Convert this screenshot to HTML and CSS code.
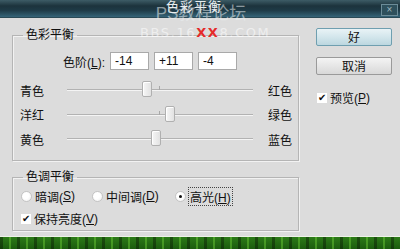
FILE: index.html
```html
<!DOCTYPE html>
<html lang="zh-CN">
<head>
  <meta charset="UTF-8" />
  <title>色彩平衡</title>
  <link rel="stylesheet" href="styles.css">
</head>
<body>
  <div class="window">
    <div class="titlebar">
      <span class="title">色彩平衡</span>
      <span class="close">×</span>
    </div>

    <div class="dialog">
      <div class="main">
        <fieldset class="group balance">
          <legend>色彩平衡</legend>
          <div class="levels">
            <label>色阶(<u>L</u>):</label>
            <input class="field" value="-14">
            <input class="field" value="+11">
            <input class="field" value="-4">
          </div>
          <div class="slider-row first">
            <span class="side">青色</span>
            <div class="track"><span class="tick"></span><span class="thumb" style="left: calc(43% - 5px)"></span></div>
            <span class="side">红色</span>
          </div>
          <div class="slider-row">
            <span class="side">洋红</span>
            <div class="track"><span class="tick"></span><span class="thumb" style="left: calc(55.5% - 5px)"></span></div>
            <span class="side">绿色</span>
          </div>
          <div class="slider-row">
            <span class="side">黄色</span>
            <div class="track"><span class="tick"></span><span class="thumb" style="left: calc(48% - 5px)"></span></div>
            <span class="side">蓝色</span>
          </div>
        </fieldset>

        <fieldset class="group tone">
          <legend>色调平衡</legend>
          <div class="radios">
            <span class="option"><span class="radio"></span>暗调(<u>S</u>)</span>
            <span class="option"><span class="radio"></span>中间调(<u>D</u>)</span>
            <span class="option"><span class="radio on"></span><span class="focus">高光(<u>H</u>)</span></span>
          </div>
          <div class="option keep"><span class="check">✔</span>保持亮度(<u>V</u>)</div>
        </fieldset>
      </div>

      <div class="actions">
        <button class="btn default">好</button>
        <button class="btn">取消</button>
        <div class="option preview"><span class="check">✔</span>预览(<u>P</u>)</div>
      </div>
    </div>

    <div class="desktop"></div>

    <div class="watermark">
      <div class="wm-big">PS教程论坛</div>
      <div class="wm-small">BBS.16<span class="red">XX</span>8.COM</div>
    </div>
  </div>
</body>
</html>
```

FILE: styles.css
```css
body {
  margin: 0;
  font-family: "Liberation Sans", "Noto Sans CJK SC", sans-serif;
  font-size: 12px;
  color: #111;
  background: #dcdcdc;
}

.window {
  position: relative;
  width: 400px;
  height: 249px;
  overflow: hidden;
  background: #dcdcdc;
}

.titlebar {
  height: 18px;
  position: relative;
  background: linear-gradient(to bottom, #3d5c66 0%, #1c333c 35%, #1e3a46 60%, #356478 100%);
  border-bottom: 1px solid #2a4a56;
  box-sizing: border-box;
}

.title {
  position: absolute;
  left: 166px;
  top: 0;
  font-size: 13px;
  line-height: 14px;
  color: #e8eef0;
  letter-spacing: 1px;
}

.close {
  position: absolute;
  left: 381px;
  top: 4px;
  width: 15px;
  height: 10px;
  border: 1px solid #6c8c98;
  color: #9fb6be;
  font-size: 10px;
  line-height: 10px;
  text-align: center;
  background: #2e505c;
}

.dialog {
  display: flex;
  height: 218px;
}

.main {
  width: 287px;
  margin-left: 12px;
}

.group {
  margin: 0;
  padding: 0;
  border: 1px solid #b5b5b5;
  box-shadow: inset 1px 1px 0 #f2f2f2, 1px 1px 0 #f2f2f2;
}

.group legend {
  margin-left: 10px;
  padding: 0 3px;
  line-height: 14px;
  font-size: 12px;
}

.balance {
  margin-top: 10px;
  height: 133px;
  box-sizing: border-box;
}

.levels {
  display: flex;
  align-items: center;
  gap: 5px;
  padding-left: 50px;
  margin-top: 10px;
  height: 18px;
}

.field {
  width: 39px;
  height: 18px;
  box-sizing: border-box;
  border: 1px solid #a9a9a9;
  padding: 0 0 0 4px;
  font-family: "Liberation Sans", sans-serif;
  font-size: 12px;
  color: #111;
  background: #fff;
}

.slider-row {
  display: flex;
  align-items: center;
  height: 24.5px;
  padding-left: 7px;
}

.slider-row.first {
  margin-top: 8px;
}

.side {
  width: 47px;
}

.slider-row .side:last-child {
  width: auto;
  margin-left: 15px;
}

.track {
  position: relative;
  width: 186px;
  height: 1px;
  background: #b2b2b2;
  border-bottom: 1px solid #f4f4f4;
}

.tick {
  position: absolute;
  left: 92px;
  top: -3px;
  width: 1px;
  height: 4px;
  background: #a8a8a8;
}

.thumb {
  position: absolute;
  top: -8px;
  width: 10px;
  height: 16px;
  box-sizing: border-box;
  border: 1px solid #b0b0b0;
  border-radius: 2px;
  background: linear-gradient(to right, #f6f6f6, #e2e2e2);
  box-shadow: inset 1px 1px 0 #fff;
}

.tone {
  margin-top: 9px;
  height: 61px;
  box-sizing: border-box;
}

.radios {
  display: flex;
  align-items: center;
  padding-left: 8px;
  margin-top: 5px;
  height: 14px;
}

.option {
  display: flex;
  align-items: center;
  white-space: nowrap;
}

.radios .option:nth-child(1) {
  width: 71px;
}

.radios .option:nth-child(2) {
  width: 83px;
}

.radio {
  width: 11px;
  height: 11px;
  box-sizing: border-box;
  border-radius: 50%;
  border: 1px solid #c4c4c4;
  background: radial-gradient(circle at 40% 40%, #fff 40%, #ececec);
  margin-right: 3px;
  position: relative;
}

.radio.on::after {
  content: "";
  position: absolute;
  left: 3px;
  top: 3px;
  width: 3px;
  height: 3px;
  border-radius: 50%;
  background: #111;
}

.focus {
  outline: 1px dotted #444;
  outline-offset: 0;
  padding: 0 1px;
}

.check {
  width: 10px;
  height: 10px;
  font-size: 10px;
  line-height: 10px;
  color: #111;
  margin-right: 3px;
  background: #fff;
  text-align: center;
}

.keep {
  padding-left: 8px;
  margin-top: 7px;
}

.actions {
  display: flex;
  flex-direction: column;
  align-items: flex-start;
  margin-left: 17px;
  padding-top: 10px;
}

.btn {
  width: 76px;
  height: 18px;
  padding: 0;
  font-family: "Noto Sans CJK SC", sans-serif;
  font-size: 12px;
  line-height: 14px;
  color: #111;
  border: 1px solid #9a9a9a;
  border-radius: 2px;
  background: linear-gradient(to bottom, #f4f4f4, #e6e6e6 50%, #d8d8d8);
  margin-bottom: 11px;
}

.btn.default {
  border-color: #6f9fb0;
  background: linear-gradient(to bottom, #e9f3f6, #d3e6ec 50%, #bcd7e0);
}

.preview {
  margin-top: 3px;
  margin-left: 1px;
}

.desktop {
  position: absolute;
  left: 0;
  top: 236px;
  width: 400px;
  height: 13px;
  border-top: 1px solid #eef2e8;
  background:
    repeating-linear-gradient(90deg, rgba(0,0,0,0.35) 0 3px, transparent 3px 9px, rgba(120,220,60,0.4) 9px 11px, transparent 11px 17px),
    linear-gradient(to bottom, #2c7a18, #1a5a0e);
}

.watermark {
  position: absolute;
  left: 140px;
  top: 4px;
  width: 120px;
  text-align: center;
  pointer-events: none;
}

.wm-big {
  font-family: "Liberation Sans", "Noto Sans CJK SC", sans-serif;
  font-size: 17px;
  line-height: 20px;
  color: rgba(235, 240, 242, 0.55);
  margin-left: 2px;
}

.wm-small {
  font-family: "DejaVu Sans", sans-serif;
  font-size: 13px;
  line-height: 13px;
  letter-spacing: 1.6px;
  color: rgba(255, 255, 255, 0.55);
  margin-top: 2px;
}

.red {
  color: #e52a2a;
  font-weight: bold;
}
```
